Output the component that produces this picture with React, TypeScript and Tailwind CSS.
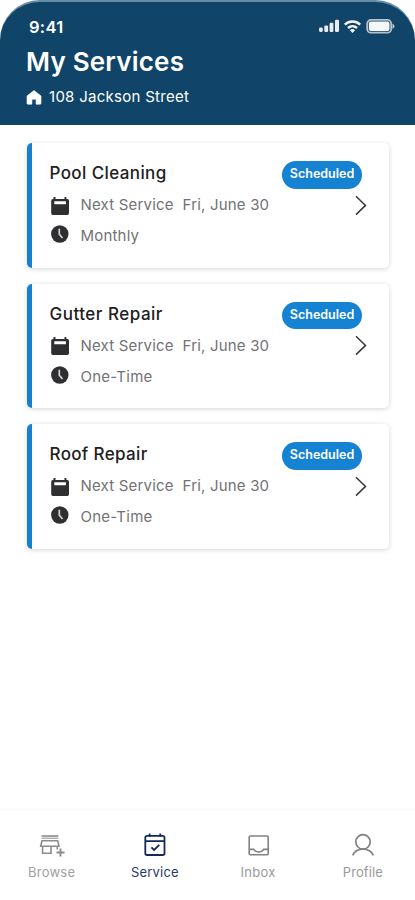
import React from "react";

const services = [
  { name: "Pool Cleaning", frequency: "Monthly", nameSpacing: "tracking-[0.4px]", freqSpacing: "tracking-[0.2px]" },
  { name: "Gutter Repair", frequency: "One-Time", nameSpacing: "tracking-[0.5px]", freqSpacing: "tracking-[0.25px]" },
  { name: "Roof Repair", frequency: "One-Time", nameSpacing: "tracking-[0.35px]", freqSpacing: "tracking-[0.25px]" },
];

function StatusIcons() {
  return (
    <svg width="76" height="16" viewBox="0 0 76 16" fill="none">
      <g fill="#e9edf1">
        <rect x="0" y="8.6" width="3.8" height="4.4" rx="1.4" />
        <rect x="5.3" y="6.4" width="3.8" height="6.6" rx="1.2" />
        <rect x="10.6" y="3.8" width="3.8" height="9.2" rx="1.2" />
        <rect x="16" y="0.8" width="4" height="12.2" rx="1.2" />
      </g>
      <g stroke="#f3f5f8" strokeWidth="2.4">
        <path d="M25.8 5.6a11.2 11.2 0 0 1 15.4 0" />
        <path d="M29 9a6.7 6.7 0 0 1 9 0" />
      </g>
      <path d="M33.5 13.9l-2.6-2.7a3.9 3.9 0 0 1 5.200 0z" fill="#f3f5f8" />
      <rect x="48.2" y="0.9" width="24" height="12.8" rx="3.8" stroke="#b9c2ca" strokeWidth="1.8" />
      <rect x="49.9" y="2.6" width="20.600" height="9.400" rx="2" fill="#f6f7f9" />
      <path d="M73.600 5v4.600c1-.4 1.700-1.200 1.700-2.300S74.600 5.400 73.600 5z" fill="#b9c2ca" stroke="#b9c2ca" strokeWidth=".4" />
    </svg>
  );
}

function HomeIcon() {
  return (
    <svg width="16" height="15" viewBox="0 0 16 15">
      <path d="M8 .5 1 5.900V13.300Q1 14.200 1.900 14.200H5.900V9.300H10.100V14.200H14.100Q15 14.200 15 13.300V5.900Z" fill="#fff" stroke="#fff" strokeWidth=".6" strokeLinejoin="round" />
    </svg>
  );
}

function CalendarIcon() {
  return (
    <svg width="19" height="18" viewBox="0 0 19 18">
      <path fillRule="evenodd" d="M3.500 0H5.500V2H14.500V0H16.400V2H17.300Q19 2 19 3.700V16.200Q19 17.900 17.300 17.900H2.900Q1.200 17.900 1.200 16.200V3.700Q1.200 2 2.900 2H3.500ZM4.300 4.200V7.300H15.900V4.200Z" fill="#2f2f31" />
    </svg>
  );
}

function ClockIcon() {
  return (
    <svg width="19" height="18" viewBox="0 0 19 18" fill="none">
      <circle cx="9.800" cy="9" r="8.700" fill="#2f2f31" />
      <path d="M9.300 3.800V9.200L12.500 13" stroke="#d4d4d4" strokeWidth="1.700" />
    </svg>
  );
}

function ServiceCard({ name, frequency, nameSpacing, freqSpacing }: (typeof services)[number]) {
  return (
    <article className="flex h-[124.5px] overflow-hidden rounded-[5px] bg-white shadow-[0_1px_5px_rgba(0,0,0,0.17)]">
      <div className="w-[4.5px] shrink-0 bg-[#1680cd]" />
      <div className="flex flex-1 flex-col pl-[18px] pt-[17px]">
        <h2 className={"text-[17px] font-medium leading-[26px] text-[#202022] " + nameSpacing}>{name}</h2>
        <div className="mt-[6px] flex h-[27px] items-center">
          <CalendarIcon />
          <span className="ml-3 whitespace-pre text-[15px] tracking-[0.19px] text-[#727274]">Next Service  Fri, June 30</span>
        </div>
        <div className="mt-1 flex h-[27px] items-center">
          <span className="-mt-[5px]"><ClockIcon /></span>
          <span className={"ml-3 text-[15px] text-[#727274] " + freqSpacing}>{frequency}</span>
        </div>
      </div>
      <div className="mr-[22px] flex flex-col items-end pt-[18px]">
        <span className="mr-[5px] flex h-[27.5px] w-20 items-center justify-center rounded-full bg-[#1682d2] text-[12.500px] font-semibold text-white">
          Scheduled
        </span>
        <svg className="mt-[6px]" width="12" height="21" viewBox="0 0 12 21" fill="none">
          <path d="M1 1.200 10.500 10.400 1 19.600" stroke="#39393b" strokeWidth="1.500" />
        </svg>
      </div>
    </article>
  );
}

function BrowseIcon() {
  return (
    <svg width="26" height="26" viewBox="0 0 26 26" fill="none" stroke="#8c8c8c" strokeWidth="1.600">
      <path d="M2.500 3H19.300" />
      <path d="M2.500 5.200H19.300" strokeWidth="1" />
      <path d="M3 7.800H18.700L20 13.300H1.700ZM3.600 13.300V20.300H12V13.300M18.300 13.300V16.500" />
      <path d="M21.500 15.500V23.500M17.500 19.500H25.500" strokeWidth="1.900" />
    </svg>
  );
}

function ServiceIcon() {
  return (
    <svg width="26" height="26" viewBox="0 0 26 26" fill="none" stroke="#14295b" strokeWidth="1.800">
      <rect x="3.300" y="2.800" width="19.200" height="19.200" rx="1.800" />
      <path d="M3.300 8.200H22.500M7.600 .5V3.500M18.300 .5V3.500" />
      <path d="M9.400 14.400 12.100 17 17.300 11.900" />
    </svg>
  );
}

function InboxIcon() {
  return (
    <svg width="26" height="26" viewBox="0 0 26 26" fill="none" stroke="#818181" strokeWidth="1.600">
      <rect x="4.200" y="3" width="19" height="18.700" rx="1" />
      <path d="M4.200 16.400H8.800C9.800 18.200 11.400 19 13.700 19S17.600 18.200 18.600 16.400H23.200" />
    </svg>
  );
}

function ProfileIcon() {
  return (
    <svg width="26" height="26" viewBox="0 0 26 26" fill="none" stroke="#818181" strokeWidth="1.700">
      <circle cx="13" cy="8.900" r="7.200" />
      <path d="M2.700 22.300C4.400 18.300 8.200 16.100 13 16.100S21.600 18.300 23.300 22.300" />
    </svg>
  );
}

const tabs = [
  { label: "Browse", Icon: BrowseIcon, style: "text-[#a0a0a0] tracking-[0.25px]" },
  { label: "Service", Icon: ServiceIcon, style: "text-[#2b3a66] tracking-[0.2px]" },
  { label: "Inbox", Icon: InboxIcon, style: "text-[#999999] tracking-[0.3px]" },
  { label: "Profile", Icon: ProfileIcon, style: "pl-[3px] text-[#999999] tracking-[0.1px]" },
];

export default function App() {
  return (
    <div className="flex h-[900px] w-[415px] flex-col overflow-hidden bg-white font-['Inter',sans-serif]">
      <header className="h-[125px] rounded-t-[40px] border-t-2 border-[#668ba4] bg-[#104469] text-white">
        <div className="flex h-[38px] items-end justify-between pl-[29px] pr-[20px]">
          <span className="mb-[1px] text-[16.5px] font-semibold leading-[24px] tracking-[0.3px]">9:41</span>
          <span className="mb-[5px]"><StatusIcons /></span>
        </div>
        <h1 className="mt-[5px] pl-[26px] text-[26px] font-semibold leading-[34px] tracking-[0.2px]">My Services</h1>
        <div className="mt-[6px] flex h-6 items-center pl-[26px]">
          <HomeIcon />
          <span className="ml-[7px] pt-px text-[15px] tracking-[0.28px]">108 Jackson Street</span>
        </div>
      </header>
      <main className="flex flex-1 flex-col gap-4 pl-[27px] pr-[26px] pt-[18px]">
        {services.map((service) => (
          <ServiceCard key={service.name} {...service} />
        ))}
      </main>
      <nav className="grid h-[91px] grid-cols-4 border-t border-[#f8f8f8] pr-[2px]">
        {tabs.map(({ label, Icon, style }) => (
          <div key={label} className={"flex flex-col items-center pt-[23px] text-[13px] leading-5 " + style}>
            <Icon />
            <span className="mt-[3px]">{label}</span>
          </div>
        ))}
      </nav>
    </div>
  );
}
